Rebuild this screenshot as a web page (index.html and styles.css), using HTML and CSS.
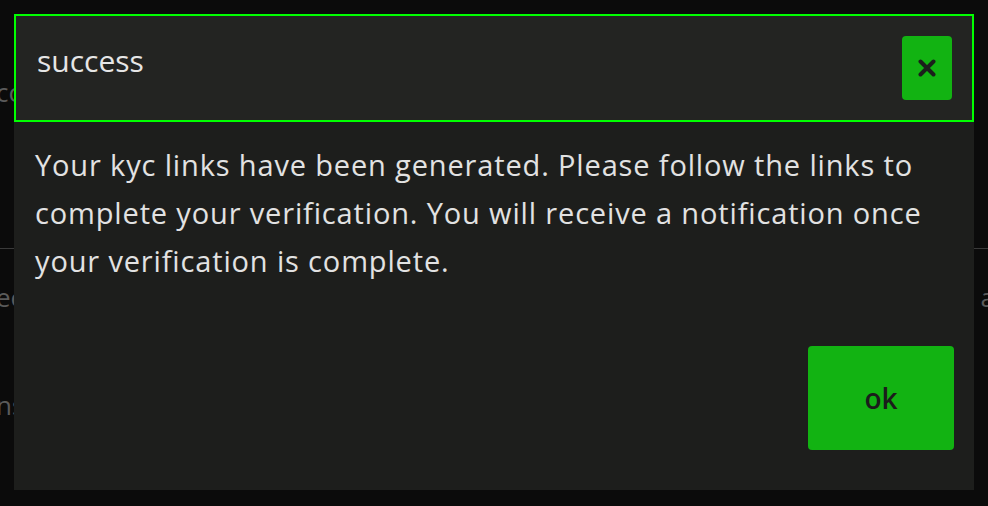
FILE: index.html
```html
<!DOCTYPE html>
<html lang="en">
<head>
    <meta charset="UTF-8">
    <meta name="viewport" content="width=device-width, initial-scale=1.0">
    <title>KYC</title>
    <link rel="stylesheet" href="styles.css">
</head>
<body>
    <div class="page">
        <div class="page-row first">conditions</div>
        <div class="page-rule"></div>
        <div class="page-row split">
            <span>eed</span>
            <span>all</span>
        </div>
        <div class="page-row">nstructions</div>
    </div>

    <div class="overlay">
        <div class="modal">
            <div class="modal-header">
                <h2 class="modal-title">success</h2>
                <button class="close-btn" aria-label="close">
                    <svg width="18" height="18" viewBox="0 0 18 18">
                        <path d="M2.5 2.5 L15.5 15.5 M15.5 2.5 L2.5 15.5" stroke="#1b1f1b" stroke-width="4" stroke-linecap="round" fill="none"/>
                    </svg>
                </button>
            </div>
            <div class="modal-body">
                <p>Your kyc links have been generated. Please follow the links to complete your verification. You will receive a notification once your verification is complete.</p>
            </div>
            <div class="modal-footer">
                <button class="ok-btn">ok</button>
            </div>
        </div>
    </div>
</body>
</html>
```

FILE: styles.css
```css
body {
    margin: 0;
    padding: 0;
    background-color: #0b0b0b;
    color: #e2e2e2;
    font-family: "Open Sans", sans-serif;
    overflow: hidden;
    height: 100vh;
}

/* page content sitting behind the dialog */
.page {
    color: #5a5a5a;
    font-size: 26px;
    overflow: hidden;
}

.page-row {
    height: 36px;
    line-height: 36px;
    margin-left: -4px;
}

.page-row.first {
    margin-top: 74px;
}

.page-rule {
    height: 1px;
    background: #3a3a3a;
    margin-top: 138px;
}

.page-row.split {
    display: flex;
    justify-content: space-between;
    margin-top: 30px;
    margin-right: -20px;
}

.page-row.split + .page-row {
    margin-top: 72px;
}

.overlay {
    position: fixed;
    inset: 0;
    padding: 14px 14px 16px;
    display: flex;
}

.modal {
    flex: 1;
    display: flex;
    flex-direction: column;
    background: #1d1e1c;
}

.modal-header {
    display: flex;
    justify-content: space-between;
    align-items: flex-start;
    padding: 20px;
    background: #232422;
    border: 2px solid #00ff00;
}

.modal-title {
    margin: 0;
    padding: 0 0 0 1px;
    font-family: "Open Sans", sans-serif;
    font-weight: normal;
    font-size: 30px;
    line-height: 50px;
    color: #e6e6e6;
}

.close-btn {
    width: 50px;
    height: 64px;
    border: none;
    border-radius: 4px;
    background: #12b312;
    display: flex;
    align-items: center;
    justify-content: center;
    padding: 0;
    cursor: pointer;
}

.modal-body {
    flex: 1;
    padding: 19px 21px 0;
}

.modal-body p {
    margin: 0;
    font-size: 29px;
    letter-spacing: 0.85px;
    line-height: 48px;
    color: #e2e2e2;
}

.modal-footer {
    display: flex;
    justify-content: flex-end;
    padding: 0 20px 40px;
}

.ok-btn {
    width: 146px;
    height: 104px;
    border: none;
    border-radius: 4px;
    background: #12b312;
    color: #1b1d1b;
    font-family: "Open Sans", sans-serif;
    font-weight: 600;
    font-size: 28px;
    cursor: pointer;
}
```
